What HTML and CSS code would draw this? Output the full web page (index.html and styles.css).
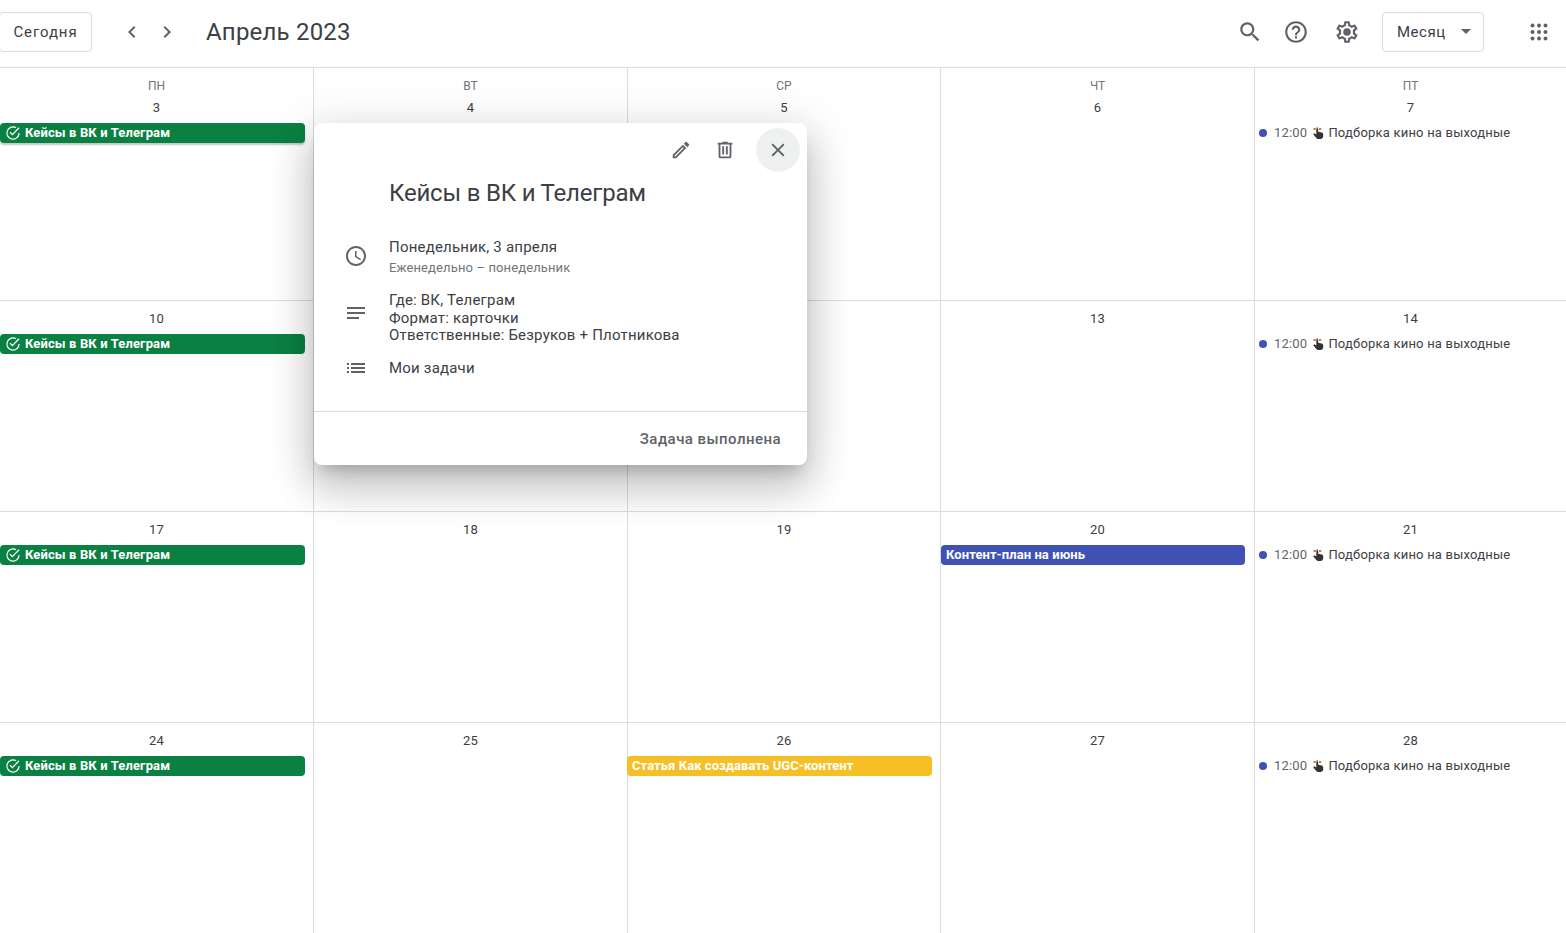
FILE: index.html
```html
<!DOCTYPE html>
<html lang="ru">

<head>
    <meta charset="utf-8" />
    <title>Календарь</title>
    <link rel="stylesheet" href="styles.css">
</head>

<body>
    <svg class="sprites" width="0" height="0">
        <symbol id="i-check" viewBox="0 0 24 24"><path d="M12 2a10 10 0 1 0 10 10h-1.800a8.200 8.200 0 1 1-4.300-7.200l1.300-1.300A10 10 0 0 0 12 2zm8.500 1.500L11 13 8 10l-1.300 1.300L11 15.600 21.800 4.800z"/></symbol>
        <symbol id="i-hand" viewBox="0 0 12 12"><path d="M4.300 2.500c0-1.100 1.900-1.100 1.900 0v2.300l3.500.8c.9.200 1.500.9 1.500 1.800v1.800c0 1.600-1.200 2.800-2.800 2.800H6.400c-.9 0-1.600-.4-2.100-1.100L1.200 7.200l1-.9 2.100 1.300z"/><path fill="#d9792b" d="M1.500 1h2.300v2H1.500zM7 1h2.300v2H7z"/><path fill="#2f5d9b" d="M4.500 .4h1.600v1.500H4.500z"/></symbol>
    </svg>

    <header class="topbar">
        <button class="btn today">Сегодня</button>
        <div class="nav">
            <svg class="nav-icon" viewBox="0 0 24 24"><path d="M15.41 7.41L14 6l-6 6 6 6 1.41-1.41L10.830 12z"/></svg>
            <svg class="nav-icon" viewBox="0 0 24 24"><path d="M8.590 16.590L10 18l6-6-6-6-1.410 1.410L13.170 12z"/></svg>
        </div>
        <div class="month-title">Апрель 2023</div>
        <div class="actions">
            <svg class="tool tool-search" viewBox="0 0 24 24"><path d="M15.5 14h-.79l-.28-.27C15.41 12.59 16 11.11 16 9.5 16 5.91 13.09 3 9.5 3S3 5.91 3 9.5 5.91 16 9.5 16c1.61 0 3.09-.59 4.23-1.57l.27.28v.79l5 4.99L20.49 19l-4.99-5zm-6 0C7.01 14 5 11.99 5 9.5S7.01 5 9.5 5 14 7.01 14 9.5 11.99 14 9.5 14z"/></svg>
            <svg class="tool" viewBox="0 0 24 24"><path d="M11 18h2v-2h-2v2zm1-16C6.48 2 2 6.48 2 12s4.48 10 10 10 10-4.48 10-10S17.52 2 12 2zm0 18c-4.41 0-8-3.59-8-8s3.59-8 8-8 8 3.59 8 8-3.59 8-8 8zm0-14c-2.21 0-4 1.79-4 4h2c0-1.1.9-2 2-2s2 .9 2 2c0 2-3 1.75-3 5h2c0-2.25 3-2.5 3-5 0-2.21-1.79-4-4-4z"/></svg>
            <svg class="tool" viewBox="0 0 24 24"><path d="M19.43 12.98c.04-.32.07-.64.07-.98 0-.34-.03-.66-.07-.98l2.11-1.65c.19-.15.24-.42.12-.64l-2-3.46c-.09-.16-.26-.25-.44-.25-.06 0-.12.01-.17.03l-2.49 1c-.52-.4-1.08-.73-1.69-.98l-.38-2.65C14.46 2.18 14.25 2 14 2h-4c-.25 0-.46.18-.49.42l-.38 2.65c-.61.25-1.17.59-1.69.98l-2.49-1c-.06-.02-.12-.03-.18-.03-.17 0-.34.09-.43.25l-2 3.46c-.13.22-.07.49.12.64l2.11 1.65c-.04.32-.07.65-.07.98 0 .33.03.66.07.98l-2.11 1.65c-.19.15-.24.42-.12.64l2 3.46c.09.16.26.25.44.25.06 0 .12-.01.17-.03l2.49-1c.52.4 1.08.73 1.69.98l.38 2.65c.03.24.24.42.49.42h4c.25 0 .46-.18.49-.42l.38-2.65c.61-.25 1.17-.59 1.69-.98l2.49 1c.06.02.12.03.18.03.17 0 .34-.09.43-.25l2-3.46c.12-.22.07-.49-.12-.64l-2.11-1.65zm-1.98-1.71c.04.31.05.52.05.73 0 .21-.02.43-.05.73l-.14 1.13.89.7 1.08.84-.7 1.21-1.27-.51-1.04-.42-.9.68c-.43.32-.84.56-1.25.73l-1.06.43-.16 1.13-.2 1.35h-1.4l-.19-1.35-.16-1.13-1.06-.43c-.43-.18-.83-.41-1.23-.71l-.91-.7-1.06.43-1.27.51-.7-1.21 1.08-.84.89-.7-.14-1.13c-.03-.31-.05-.54-.05-.74s.02-.43.05-.73l.14-1.13-.89-.7-1.08-.84.7-1.21 1.27.51 1.04.42.9-.68c.43-.32.84-.56 1.25-.73l1.06-.43.16-1.13.2-1.35h1.39l.19 1.35.16 1.13 1.06.43c.43.18.83.41 1.23.71l.91.7 1.06-.43 1.27-.51.7 1.21-1.07.85-.89.7.14 1.13zM12 8.500a3.500 3.500 0 1 0 0 7 3.500 3.500 0 0 0 0-7z"/></svg>
            <button class="btn view">Месяц<span class="caret"></span></button>
            <svg class="apps" viewBox="0 0 18 18">
                <circle cx="2.500" cy="2.500" r="2"/><circle cx="9" cy="2.500" r="2"/><circle cx="15.500" cy="2.500" r="2"/>
                <circle cx="2.500" cy="9" r="2"/><circle cx="9" cy="9" r="2"/><circle cx="15.500" cy="9" r="2"/>
                <circle cx="2.500" cy="15.500" r="2"/><circle cx="9" cy="15.500" r="2"/><circle cx="15.500" cy="15.500" r="2"/>
            </svg>
        </div>
    </header>

    <main class="month">
        <!-- week 1 -->
        <div class="cell first-row">
            <div class="weekday">ПН</div>
            <div class="date">3</div>
            <div class="bar bar-task bar-active"><svg class="check"><use href="#i-check"/></svg>Кейсы в ВК и Телеграм</div>
        </div>
        <div class="cell first-row"><div class="weekday">ВТ</div><div class="date">4</div></div>
        <div class="cell first-row"><div class="weekday">СР</div><div class="date">5</div></div>
        <div class="cell first-row"><div class="weekday">ЧТ</div><div class="date">6</div></div>
        <div class="cell first-row">
            <div class="weekday">ПТ</div>
            <div class="date">7</div>
            <div class="timed"><span class="dot"></span><span class="time">12:00</span><svg class="hand"><use href="#i-hand"/></svg>Подборка кино на выходные</div>
        </div>

        <!-- week 2, 11 and 12 sit under the popup -->
        <div class="cell">
            <div class="date">10</div>
            <div class="bar bar-task"><svg class="check"><use href="#i-check"/></svg>Кейсы в ВК и Телеграм</div>
        </div>
        <div class="cell"></div>
        <div class="cell"></div>
        <div class="cell"><div class="date">13</div></div>
        <div class="cell">
            <div class="date">14</div>
            <div class="timed"><span class="dot"></span><span class="time">12:00</span><svg class="hand"><use href="#i-hand"/></svg>Подборка кино на выходные</div>
        </div>

        <!-- week 3 -->
        <div class="cell">
            <div class="date">17</div>
            <div class="bar bar-task"><svg class="check"><use href="#i-check"/></svg>Кейсы в ВК и Телеграм</div>
        </div>
        <div class="cell"><div class="date">18</div></div>
        <div class="cell"><div class="date">19</div></div>
        <div class="cell">
            <div class="date">20</div>
            <div class="bar bar-blue">Контент-план на июнь</div>
        </div>
        <div class="cell">
            <div class="date">21</div>
            <div class="timed"><span class="dot"></span><span class="time">12:00</span><svg class="hand"><use href="#i-hand"/></svg>Подборка кино на выходные</div>
        </div>

        <!-- week 4 -->
        <div class="cell">
            <div class="date">24</div>
            <div class="bar bar-task"><svg class="check"><use href="#i-check"/></svg>Кейсы в ВК и Телеграм</div>
        </div>
        <div class="cell"><div class="date">25</div></div>
        <div class="cell">
            <div class="date">26</div>
            <div class="bar bar-yellow">Статья Как создавать UGC-контент</div>
        </div>
        <div class="cell"><div class="date">27</div></div>
        <div class="cell">
            <div class="date">28</div>
            <div class="timed"><span class="dot"></span><span class="time">12:00</span><svg class="hand"><use href="#i-hand"/></svg>Подборка кино на выходные</div>
        </div>
    </main>

    <section class="popup">
        <div class="popup-tools">
            <svg class="popup-icon" viewBox="0 0 24 24"><path d="M3 17.25V21h3.75L17.81 9.94l-3.75-3.75L3 17.25zM5.92 19H5v-.92l9.06-9.06.92.92L5.92 19zM20.71 5.63l-2.34-2.34c-.2-.2-.45-.29-.71-.29s-.51.1-.7.29l-1.83 1.83 3.75 3.75 1.83-1.83c.39-.39.39-1.02 0-1.41z"/></svg>
            <svg class="popup-icon" viewBox="0 0 24 24"><path d="M15 4V3H9v1H4v2h1v13c0 1.1.9 2 2 2h10c1.1 0 2-.9 2-2V6h1V4h-5zm2 15H7V6h10v13zM9 8h2v9H9zm4 0h2v9h-2z"/></svg>
            <div class="close"><svg class="popup-icon" viewBox="0 0 24 24"><path d="M19 6.41L17.59 5 12 10.59 6.41 5 5 6.41 10.59 12 5 17.59 6.41 19 12 13.41 17.59 19 19 17.59 13.41 12z"/></svg></div>
        </div>
        <h2 class="popup-title">Кейсы в ВК и Телеграм</h2>
        <div class="row row-date">
            <svg class="row-icon" viewBox="0 0 24 24"><path d="M11.99 2C6.47 2 2 6.48 2 12s4.47 10 9.99 10C17.52 22 22 17.52 22 12S17.52 2 11.99 2zM12 20c-4.42 0-8-3.58-8-8s3.58-8 8-8 8 3.58 8 8-3.58 8-8 8zm.5-13H11v6l5.25 3.15.75-1.23-4.5-2.67z"/></svg>
            <div>
                <div class="row-main">Понедельник, 3 апреля</div>
                <div class="row-sub">Еженедельно – понедельник</div>
            </div>
        </div>
        <div class="row row-notes">
            <svg class="row-icon" viewBox="0 0 24 24"><path d="M3 6h18v2H3zM3 11h18v2H3zM3 16h12v2H3z"/></svg>
            <div class="row-text">Где: ВК, Телеграм<br>Формат: карточки<br>Ответственные: Безруков + Плотникова</div>
        </div>
        <div class="row row-list">
            <svg class="row-icon" viewBox="0 0 24 24"><path d="M3 7h2v2H3zM3 11h2v2H3zM3 15h2v2H3zM7 7h14v2H7zM7 11h14v2H7zM7 15h14v2H7z"/></svg>
            <div class="row-main">Мои задачи</div>
        </div>
        <div class="popup-footer">Задача выполнена</div>
    </section>
</body>

</html>
```
FILE: styles.css
```css
* {
    box-sizing: border-box;
}

html,
body {
    margin: 0;
    height: 100%;
    overflow: hidden;
}

body {
    position: relative;
    background: #fff;
    color: #3c4043;
    font-family: Roboto, "Liberation Sans", sans-serif;
}

.sprites {
    position: absolute;
}

.topbar {
    display: flex;
    align-items: center;
    height: 68px;
    padding: 0 0 4px 0;
    border-bottom: 1px solid #dadce0;
}

.btn {
    height: 40px;
    background: #fff;
    border: 1px solid #dadce0;
    border-radius: 4px;
    color: #3c4043;
    font-family: Roboto, sans-serif;
    font-size: 15px;
    letter-spacing: .5px;
}

.today {
    width: 93px;
    margin-left: -1px;
    padding: 0;
    letter-spacing: .9px;
}

.nav {
    display: flex;
    gap: 11px;
    margin-left: 28px;
}

.nav-icon {
    width: 24px;
    height: 24px;
    fill: #5f6368;
}

.month-title {
    margin-left: 27px;
    font-size: 24px;
    letter-spacing: .2px;
    color: #3c4043;
}

.actions {
    display: flex;
    align-items: center;
    margin-left: auto;
}

.tool {
    width: 26px;
    height: 26px;
    margin-right: 25px;
    fill: #5f6368;
}

.tool-search {
    margin-right: 20px;
}

.view {
    display: flex;
    align-items: center;
    width: 102px;
    margin-left: -3px;
    padding: 0 0 0 14px;
}

.caret {
    width: 0;
    height: 0;
    margin-left: 15px;
    margin-top: -1px;
    border-left: 5px solid transparent;
    border-right: 5px solid transparent;
    border-top: 5px solid #5f6368;
}

.apps {
    width: 18px;
    height: 18px;
    margin: 0 18px 0 46px;
    fill: #5f6368;
}

.month {
    display: grid;
    grid-template-columns: 314px 314px 313px 314px 312px;
    grid-template-rows: 233px 211px 211px 211px;
    width: 1567px;
}

.cell {
    padding-top: 8px;
    border-right: 1px solid #dadce0;
    border-bottom: 1px solid #dadce0;
}

.weekday {
    height: 19px;
    margin-top: 1px;
    line-height: 19px;
    text-align: center;
    font-size: 12px;
    color: #70757a;
}

.date {
    height: 20px;
    line-height: 20px;
    margin-bottom: 5px;
    text-align: center;
    font-size: 13px;
    letter-spacing: .3px;
    color: #3c4043;
}

.first-row .date {
    margin-top: 2px;
}

.bar {
    display: flex;
    align-items: center;
    height: 20px;
    margin-right: 8px;
    padding: 0 0 1px 5px;
    border-radius: 4px;
    color: #fff;
    font-size: 13px;
    font-weight: 700;
    letter-spacing: .12px;
    white-space: nowrap;
}

.bar-task {
    background: #0b8043;
}

.bar-active {
    box-shadow: 0 2px 2px rgba(60, 64, 67, .3);
}

.bar-blue {
    margin-right: 9px;
    letter-spacing: .07px;
    background: #3f51b5;
}

.bar-yellow {
    margin-left: -1px;
    letter-spacing: .06px;
    background: #f6bf26;
}

.check {
    width: 16px;
    height: 16px;
    margin: 1px 4px 0 0;
    fill: #fff;
}

.timed {
    display: flex;
    align-items: center;
    height: 20px;
    padding: 0 0 1px 4px;
    font-size: 13px;
    letter-spacing: .2px;
    white-space: nowrap;
    color: #3c4043;
}

.dot {
    width: 8px;
    height: 8px;
    margin-right: 7px;
    border-radius: 50%;
    background: #3f51b5;
}

.time {
    margin-right: 5px;
    color: #5f6368;
}

.hand {
    width: 12px;
    height: 12px;
    margin-right: 4px;
    fill: #333;
}

.popup {
    position: absolute;
    left: 314px;
    top: 123px;
    width: 493px;
    height: 342px;
    background: #fff;
    border-radius: 8px;
    box-shadow: 0 24px 38px 3px rgba(0, 0, 0, .14), 0 9px 46px 8px rgba(0, 0, 0, .12), 0 11px 15px -7px rgba(0, 0, 0, .2);
}

.popup-tools {
    display: flex;
    align-items: center;
    justify-content: flex-end;
    gap: 22px;
    height: 44px;
    padding-right: 7px;
    transform: translateY(5px);
}

.popup-icon {
    display: block;
    width: 22px;
    height: 22px;
    fill: #5f6368;
}

.close {
    display: flex;
    align-items: center;
    justify-content: center;
    width: 44px;
    height: 44px;
    margin-left: -2px;
    border-radius: 50%;
    background: #eff0f0;
}

.popup-title {
    margin: 12px 0 0 75px;
    font-size: 24px;
    font-weight: 400;
    letter-spacing: -.2px;
    line-height: 28px;
    color: #3c4043;
}

.row {
    display: flex;
    align-items: center;
    padding-left: 30px;
    letter-spacing: .2px;
}

.row-icon {
    flex: none;
    width: 24px;
    height: 24px;
    margin-right: 21px;
    fill: #5f6368;
}

.row-date {
    margin-top: 31px;
}

.row-date .row-icon {
    margin-top: -4px;
}

.row-notes {
    margin-top: 15px;
}

.row-notes .row-icon {
    margin-top: -10px;
}

.row-list {
    margin-top: 11px;
}

.row-main,
.row-text {
    font-size: 15px;
    line-height: 18px;
    color: #3c4043;
}

.row-text {
    line-height: 17.6px;
}

.row-sub {
    margin-top: 3px;
    font-size: 13px;
    letter-spacing: .12px;
    line-height: 18px;
    color: #70757a;
}

.popup-footer {
    position: absolute;
    left: 0;
    right: 0;
    bottom: 0;
    height: 54px;
    padding: 18px 26px 0 0;
    border-top: 1px solid #dadce0;
    text-align: right;
    font-size: 15px;
    font-weight: 500;
    letter-spacing: .45px;
    color: #5f6368;
}
```
